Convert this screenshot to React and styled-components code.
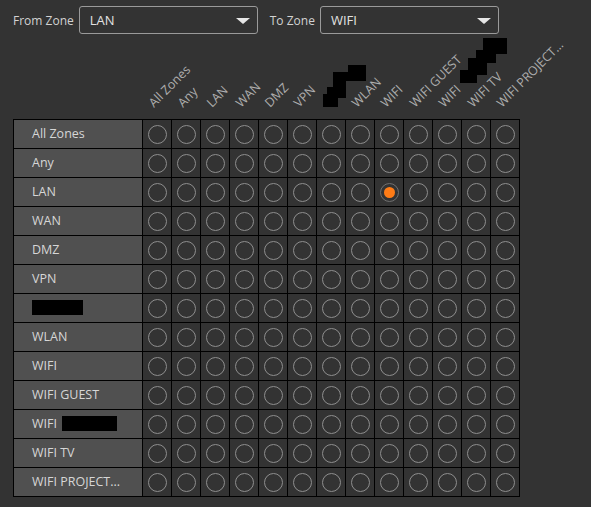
import styled, { createGlobalStyle } from 'styled-components'

const ZONES = [
  'All Zones', 'Any', 'LAN', 'WAN', 'DMZ', 'VPN', '', 'WLAN', 'WIFI',
  'WIFI GUEST', 'WIFI', 'WIFI TV', 'WIFI PROJECT...',
]
// [row, col] of the selected pair: LAN -> WIFI
const SELECTED = [2, 8]

const GlobalStyle = createGlobalStyle`
  html, body {
    margin: 0;
    background: #333333;
  }
  body {
    font-family: 'Open Sans', 'Noto Sans', sans-serif;
  }
`

const Page = styled.div`
  width: 591px;
  height: 507px;
  padding: 6px 0 0 13px;
  box-sizing: border-box;
`

const Toolbar = styled.div`
  display: flex;
  align-items: center;
  height: 28px;
`

const FieldLabel = styled.span`
  font-size: 12px;
  color: #d2d2d2;
  margin-right: 5px;
  margin-left: ${(p) => p.$gap || 0}px;
`

const Select = styled.div`
  position: relative;
  width: 179px;
  height: 28px;
  box-sizing: border-box;
  border: 1px solid #9a9a9a;
  border-radius: 3px;
  padding-left: 10px;
  display: flex;
  align-items: center;
  font-size: 13px;
  color: #e2e2e2;
`

const Arrow = styled.span`
  position: absolute;
  right: 7px;
  top: 11px;
  width: 0;
  height: 0;
  border-left: 7px solid transparent;
  border-right: 7px solid transparent;
  border-top: 6px solid #e6e6e6;
`

const HeaderRow = styled.div`
  position: relative;
  display: grid;
  grid-template-columns: 129px repeat(13, 29px);
  height: 85px;
`

const HeaderCell = styled.div`
  position: relative;
`

const HeaderText = styled.span`
  position: absolute;
  left: 14px;
  bottom: 9px;
  transform-origin: left bottom;
  transform: rotate(-45deg);
  white-space: nowrap;
  font-size: 12.5px;
  line-height: 14px;
  color: #adadad;
`

const Redaction = styled.svg`
  position: absolute;
  top: 0;
  left: 0;
  pointer-events: none;
`

const Grid = styled.div`
  display: grid;
  grid-template-columns: 128px repeat(13, 28px);
  grid-auto-rows: 28px;
  gap: 1px;
  padding: 1px;
  background: #000;
  width: max-content;
`

const RowLabel = styled.div`
  background: #505050;
  color: #d6d6d6;
  font-size: 12.5px;
  padding: 0 0 1px 18px;
  display: flex;
  align-items: center;
  white-space: nowrap;
`

const Block = styled.span`
  display: inline-block;
  width: ${(p) => p.$w}px;
  height: 15px;
  background: #000;
  margin-left: ${(p) => p.$ml || 0}px;
`

const Cell = styled.div`
  background: #333333;
  display: flex;
  align-items: center;
  justify-content: center;
`

const Radio = styled.span`
  width: 19px;
  height: 19px;
  box-sizing: border-box;
  border-radius: 50%;
  border: 1.5px solid ${(p) => (p.$on ? '#6f6f6f' : '#8e8e8e')};
  display: flex;
  align-items: center;
  justify-content: center;

  &::after {
    content: '';
    display: ${(p) => (p.$on ? 'block' : 'none')};
    width: 11px;
    height: 11px;
    border-radius: 50%;
    background: #ff7c16;
  }
`

function ColumnLabel({ name, index }) {
  if (index === 6) return null
  return <HeaderText>{name}</HeaderText>
}

export default function App() {
  return (
    <Page>
      <GlobalStyle />
      <Toolbar>
        <FieldLabel>From Zone</FieldLabel>
        <Select>
          LAN
          <Arrow />
        </Select>
        <FieldLabel $gap={12}>To Zone</FieldLabel>
        <Select>
          WIFI
          <Arrow />
        </Select>
      </Toolbar>

      <HeaderRow>
        <div />
        {ZONES.map((z, i) => (
          <HeaderCell key={i}>
            <ColumnLabel name={z} index={i} />
          </HeaderCell>
        ))}
        <Redaction width="578" height="85" viewBox="13 34 578 85">
          <polygon
            fill="#000"
            points="348,65 366,65 366,81 346,81 346,98 338,98 338,107 323,107 323,94 327,94 327,87 333,87 333,72 348,72"
          />
          <polygon
            fill="#000"
            points="483,38 507,38 507,54 496,54 496,63 487,63 487,75 477,75 477,83 460,83 460,70 468,70 468,58 476,58 476,50 483,50"
          />
        </Redaction>
      </HeaderRow>

      <Grid>
        {ZONES.map((z, r) => [
          <RowLabel key={`l${r}`}>
            {r === 6 ? <Block $w={51} /> : z}
            {r === 10 && <Block $w={55} $ml={5} />}
          </RowLabel>,
          ...ZONES.map((_, c) => (
            <Cell key={`${r}-${c}`}>
              <Radio $on={r === SELECTED[0] && c === SELECTED[1]} />
            </Cell>
          )),
        ])}
      </Grid>
    </Page>
  )
}
